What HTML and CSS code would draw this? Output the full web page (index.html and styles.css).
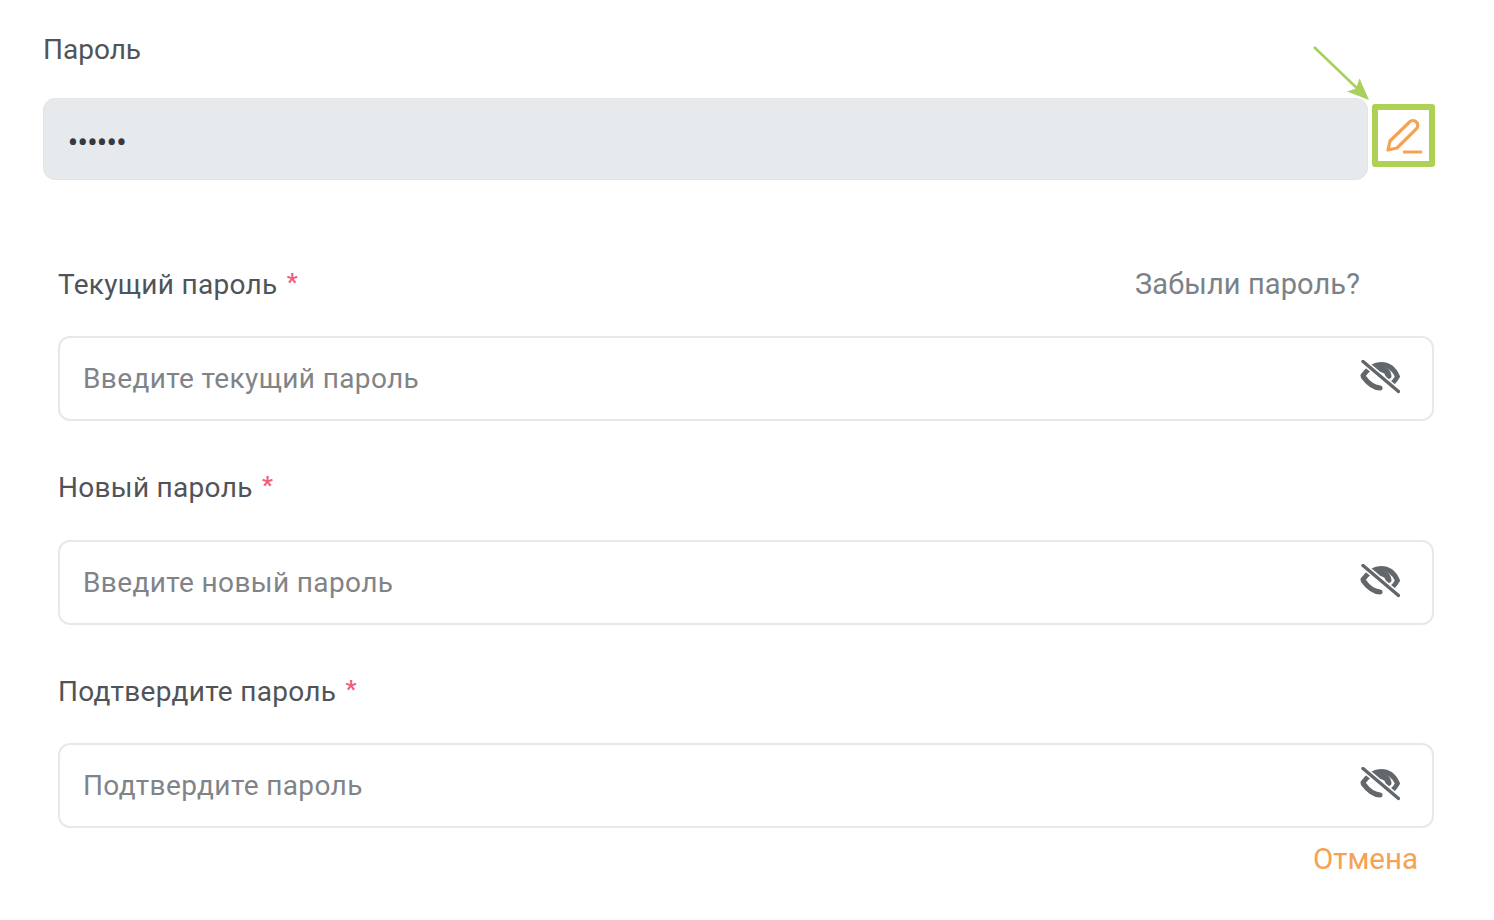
FILE: index.html
```html
<!DOCTYPE html>
<html lang="ru">
<head>
<meta charset="utf-8">
<title>Пароль</title>
<link rel="stylesheet" href="styles.css">
</head>
<body>
<svg width="0" height="0" class="defs">
  <symbol id="eye" viewBox="0 0 40 34">
    <path d="M3 15.500C9 7.500 15 4.500 21 4.500c7 0 13 4 16.500 12-1.300 2.500-3 4.800-5 6.600" fill="none" stroke="currentColor" stroke-width="4.800" stroke-linecap="round"/>
    <path d="M3.500 17c5 7 10 10.500 16.500 11" fill="none" stroke="currentColor" stroke-width="5.200" stroke-linecap="round"/>
    <path d="M16 11.500c2-2 4.500-2.600 6.500-2 3.200 .7 5.500 3 6 6.500" fill="none" stroke="currentColor" stroke-width="6" stroke-linecap="round"/>
    <path d="M3 1.500 38.500 31.500" fill="none" stroke="#fff" stroke-width="6.500"/>
    <path d="M3 1.500 38.500 31.500" fill="none" stroke="currentColor" stroke-width="3.400" stroke-linecap="round"/>
  </symbol>
</svg>
<main class="page">
  <section class="current">
    <div class="current-label">Пароль</div>
    <div class="current-row">
      <div class="current-field"><span class="dots">••••••</span></div>
      <div class="edit-box">
        <svg class="arrow" width="60" height="58" viewBox="0 0 60 58"><path d="M2 2 49 47" fill="none" stroke="#a9cf5d" stroke-width="2.600"/><path d="M57 55 35 46.500 44 43.500 47.500 33.500Z" fill="#a9cf5d"/></svg>
        <svg class="pencil" width="40" height="40" viewBox="0 0 40 40">
          <path d="M4 34 6 25 25.500 6c2-2 4.800-2 6.800 0s2 4.800 0 6.800L13 32Z" fill="none" stroke="#f4a253" stroke-width="3.200" stroke-linejoin="round"/>
          <path d="M19 36H38" fill="none" stroke="#f4a253" stroke-width="3"/>
        </svg>
      </div>
    </div>
  </section>

  <form class="form">
    <div class="label-row">
      <span class="label">Текущий пароль <span class="req">*</span></span>
      <span class="forgot">Забыли пароль?</span>
    </div>
    <div class="input"><span class="placeholder">Введите текущий пароль</span><svg class="eye"><use href="#eye"/></svg></div>

    <div class="label-row">
      <span class="label">Новый пароль <span class="req">*</span></span>
    </div>
    <div class="input"><span class="placeholder">Введите новый пароль</span><svg class="eye"><use href="#eye"/></svg></div>

    <div class="label-row">
      <span class="label">Подтвердите пароль <span class="req">*</span></span>
    </div>
    <div class="input"><span class="placeholder">Подтвердите пароль</span><svg class="eye"><use href="#eye"/></svg></div>

    <div class="actions"><span class="cancel">Отмена</span></div>
  </form>
</main>
</body>
</html>
```
FILE: styles.css
```css
* { box-sizing: border-box; }
html, body { margin: 0; padding: 0; background: #fff; }
body { font-family: Roboto, "Noto Sans", sans-serif; color: #495057; overflow: hidden; }
.defs { position: absolute; }
.page { width: 1494px; height: 920px; padding: 32px 59px 0 43px; }
.current-label { font-size: 28px; line-height: 36px; color: #505458; margin-bottom: 30px; }
.current-row { display: flex; align-items: flex-start; gap: 4px; }
.current-field { flex: 1; height: 82px; background: #e7eaed; border: 1px solid #e2e5e8; border-radius: 12px; padding: 8px 24px 0; display: flex; align-items: center; }
.dots { font-size: 27px; color: #343a40; line-height: 1; font-weight: 700; }
.edit-box { position: relative; width: 63px; height: 63px; margin-top: 6px; border: 6px solid #add055; border-radius: 3px; display: flex; align-items: center; justify-content: center; }
.arrow { position: absolute; left: -66px; top: -65px; }
.form { margin: 86px 1px 0 15px; }
.label-row { display: flex; justify-content: space-between; align-items: center; height: 36px; padding-right: 74px; margin-bottom: 34px; font-size: 28px; letter-spacing: .3px; }
.label-row:not(:first-child) { margin-top: 48.5px; }
.label { color: #505458; }
.req { color: #ef5f7c; font-size: 24px; font-weight: 700; vertical-align: 4px; margin-left: 2px; }
.forgot { color: #7b8287; font-size: 29px; letter-spacing: .1px; }
.input { height: 85px; border: 2px solid #e6e8ea; border-radius: 12px; padding: 0 32px 0 23px; display: flex; align-items: center; justify-content: space-between; }
.placeholder { font-size: 28px; letter-spacing: .38px; color: #808488; }
.eye { width: 40px; height: 34px; color: #62676b; margin-top: -3px; }
.actions { display: flex; justify-content: flex-end; padding-right: 16px; margin-top: 13px; }
.cancel { font-size: 29.500px; line-height: 36px; color: #f4a253; }
```
